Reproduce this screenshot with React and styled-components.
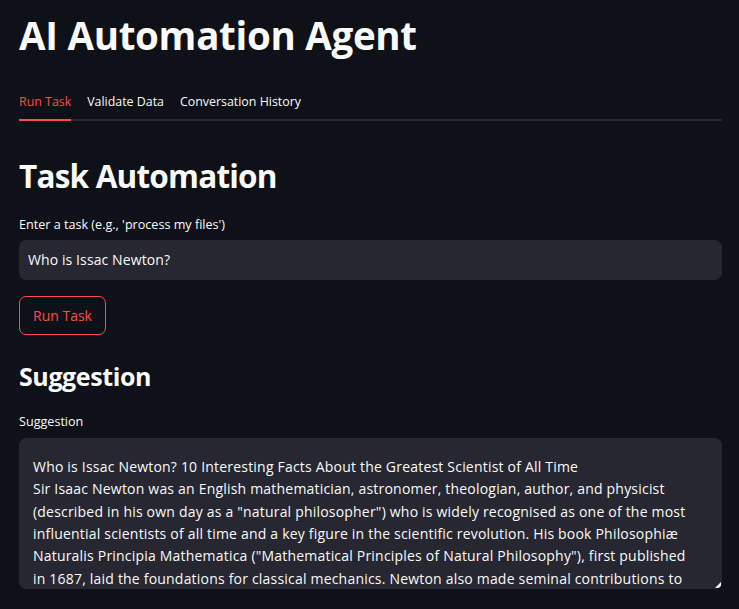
import React from "react";
import styled, { createGlobalStyle } from "styled-components";

const GlobalStyle = createGlobalStyle`
    html, body {
        margin: 0;
        padding: 0;
        background: #0e1117;
    }
    body {
        font-family: "Open Sans", "Noto Sans", sans-serif;
        color: #fafafa;
    }
`;

const Page = styled.main`
    min-height: 609px;
    padding: 12px 17px 0 19px;
    display: flex;
    flex-direction: column;
    overflow: hidden;
`;

const Title = styled.h1`
    margin: 0;
    font-size: 38.5px;
    line-height: 46px;
    font-weight: 700;
    letter-spacing: -0.3px;
`;

const TabList = styled.div`
    margin-top: 25px;
    display: flex;
    gap: 16px;
    border-bottom: 2px solid #262730;
`;

const Tab = styled.button`
    background: none;
    border: none;
    padding: 0;
    height: 38px;
    margin-bottom: -2px;
    font-family: inherit;
    font-size: 12.4px;
    color: ${props => (props.active ? "#ff4b4b" : "#fafafa")};
    border-bottom: 2px solid ${props => (props.active ? "#ff4b4b" : "transparent")};
    cursor: pointer;
`;

const Heading = styled.h2`
    margin: ${props => props.top}px 0 0;
    font-size: ${props => props.size}px;
    line-height: 1.2;
    font-weight: 700;
    letter-spacing: ${props => props.spacing}px;
`;

const Label = styled.label`
    display: block;
    margin-top: ${props => props.top}px;
    font-size: 12.6px;
    line-height: 16px;
`;

const Input = styled.input`
    margin-top: 7px;
    height: 40px;
    box-sizing: border-box;
    width: 100%;
    border: none;
    border-radius: 7px;
    background: #262730;
    color: #fafafa;
    padding: 0 9px;
    font-family: inherit;
    font-size: 14px;
    letter-spacing: 0.1px;
    outline: none;
`;

const Button = styled.button`
    align-self: flex-start;
    margin-top: 16px;
    height: 39px;
    padding: 0 13px;
    background: transparent;
    border: 1px solid #ff4b4b;
    border-radius: 7px;
    color: #ff4b4b;
    font-family: inherit;
    font-size: 14px;
    cursor: pointer;
`;

// scrolled textarea: only the first six lines are in view
const TextArea = styled.div`
    position: relative;
    margin-top: 8px;
    height: 151px;
    box-sizing: border-box;
    border-radius: 7px;
    background: #262730;
    padding: 18px 14px 0;
    overflow: hidden;
    font-size: 14px;
    line-height: 22.4px;
    letter-spacing: 0.2px;
`;

const Line = styled.div`
    white-space: nowrap;
`;

const Grip = styled.span`
    position: absolute;
    right: 1px;
    bottom: 1px;
    width: 0;
    height: 0;
    border-left: 6px solid transparent;
    border-bottom: 6px solid #fafafa;
`;

const lines = [
    "Who is Issac Newton? 10 Interesting Facts About the Greatest Scientist of All Time",
    "Sir Isaac Newton was an English mathematician, astronomer, theologian, author, and physicist",
    "(described in his own day as a \"natural philosopher\") who is widely recognised as one of the most",
    "influential scientists of all time and a key figure in the scientific revolution. His book Philosophiæ",
    "Naturalis Principia Mathematica (\"Mathematical Principles of Natural Philosophy\"), first published",
    "in 1687, laid the foundations for classical mechanics. Newton also made seminal contributions to"
];

const tabs = ["Run Task", "Validate Data", "Conversation History"];

const App = () => (
    <>
        <GlobalStyle />
        <Page>
            <Title>AI Automation Agent</Title>
            <TabList>
                {tabs.map((tab, index) => (
                    <Tab key={tab} active={index === 0}>{tab}</Tab>
                ))}
            </TabList>
            <Heading top={36} size={31.5} spacing={-0.8}>Task Automation</Heading>
            <Label top={22}>Enter a task (e.g., 'process my files')</Label>
            <Input defaultValue="Who is Issac Newton?" />
            <Button>Run Task</Button>
            <Heading top={26} size={25} spacing={-0.4}>Suggestion</Heading>
            <Label top={23}>Suggestion</Label>
            <TextArea>
                {lines.map(line => (
                    <Line key={line}>{line}</Line>
                ))}
                <Grip />
            </TextArea>
        </Page>
    </>
);

export default App;
